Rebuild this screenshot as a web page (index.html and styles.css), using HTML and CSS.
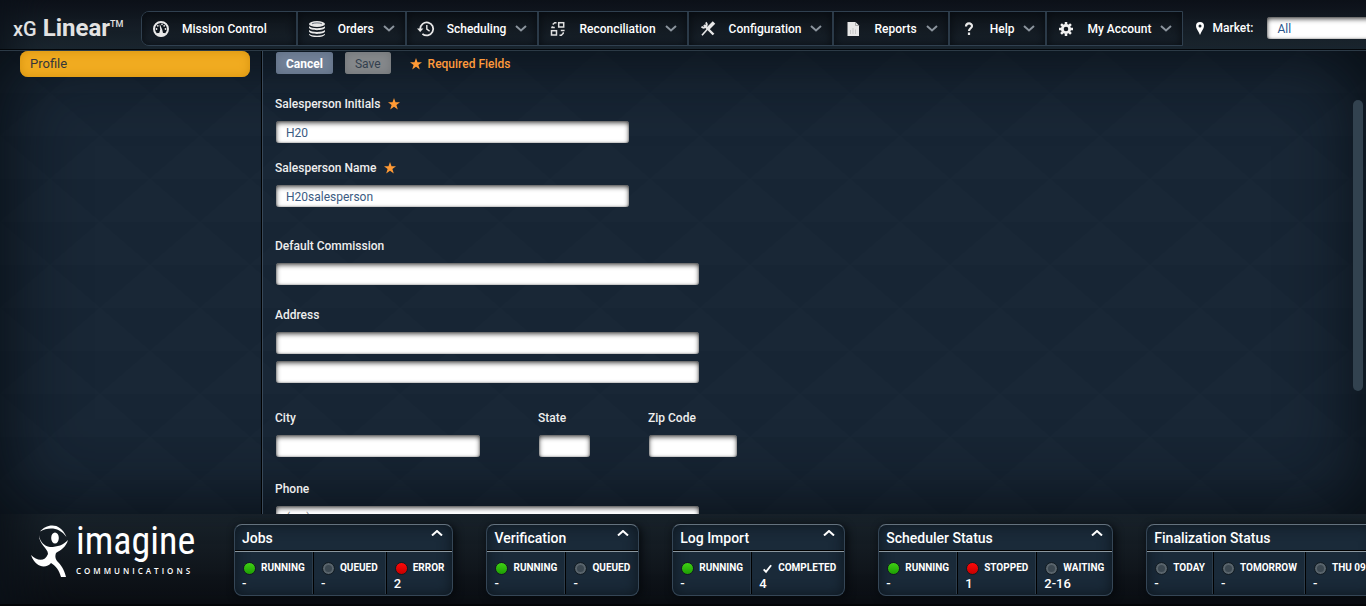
FILE: index.html
```html
<!DOCTYPE html>
<html lang="en">
<head>
<meta charset="utf-8">
<title>xG Linear</title>
<link rel="stylesheet" href="styles.css">
</head>
<body>
<header class="topbar">
  <h1 class="brand"><span class="brand-xg">xG</span> Linear<sup class="brand-tm">TM</sup></h1>
  <nav class="menu">
    <button class="menu-item menu-item-plain" type="button">
      <svg class="menu-icon" viewBox="0 0 18 18"><circle cx="9" cy="9" r="7" fill="#0e151c" stroke="#e8e8e8" stroke-width="2"/><path d="M4 14.500a7 7 0 0 0 10 0l-1.500-1.500H11l-.8-3.500L8 4.500l-.4.200.6 5-1 3.300H5.500z" fill="#e8e8e8"/><g fill="#e8e8e8"><circle cx="4.500" cy="9" r=".9"/><circle cx="5.800" cy="5.800" r=".9"/><circle cx="12.200" cy="5.800" r=".9"/><circle cx="13.500" cy="9" r=".9"/><circle cx="10" cy="4.400" r=".8"/></g></svg>
      Mission Control
    </button>
    <button class="menu-item" type="button">
      <svg class="menu-icon" viewBox="0 0 18 18" fill="#e8e8e8"><ellipse cx="9" cy="4" rx="8" ry="3"/><path d="M1 6.200c2 2.600 14 2.600 16 0v1.600c-1 3.200-15 3.200-16 0zM1 10c2 2.600 14 2.600 16 0v1.600c-1 3.200-15 3.200-16 0zM1 13.800c2 2.600 14 2.600 16 0v.7c-1 3.400-15 3.400-16 0z"/><path d="M4 3.800c2-1.200 8-1.200 10 0" stroke="#68707a" fill="none"/></svg>
      Orders
      <svg class="chevron" viewBox="0 0 12 7"><path d="M1 1l5 4.500L11 1"/></svg>
    </button>
    <button class="menu-item" type="button">
      <svg class="menu-icon" viewBox="0 0 18 18" fill="none" stroke="#e8e8e8" stroke-width="1.800"><path d="M3.200 9A6.500 6.500 0 1 1 5.400 13.800"/><path d="M9.800 5v4.200l2.800 1.900" stroke-width="1.400"/><path d="M0 8.500h6.400L3.200 12z" fill="#e8e8e8" stroke="none"/></svg>
      Scheduling
      <svg class="chevron" viewBox="0 0 12 7"><path d="M1 1l5 4.500L11 1"/></svg>
    </button>
    <button class="menu-item" type="button">
      <svg class="menu-icon" viewBox="0 0 18 18" fill="none" stroke="#e0e0e0" stroke-width="1.500"><rect x="9.700" y="2.700" width="5" height="4.300"/><rect x="2.500" y="10.700" width="5" height="4.300"/><path d="M7.500 2.700H5.700L3.700 4.500M2.200 7.600h3.600M3.500 6.200v1M10.500 15.200h1.800l2-2v-1M11.800 10.500h3.800"/></svg>
      Reconciliation
      <svg class="chevron" viewBox="0 0 12 7"><path d="M1 1l5 4.500L11 1"/></svg>
    </button>
    <button class="menu-item" type="button">
      <svg class="menu-icon" viewBox="0 0 18 18" stroke="#e8e8e8" fill="none"><path d="M5 5l9.500 9.500" stroke-width="2.400"/><path d="M6.800 2.400A3 3 0 1 1 2.500 6.600" stroke-width="1.800"/><path d="M15 2.500L9 8.500" stroke-width="3.600"/><path d="M9 8.500l-6 6.800" stroke-width="1.600"/></svg>
      Configuration
      <svg class="chevron" viewBox="0 0 12 7"><path d="M1 1l5 4.500L11 1"/></svg>
    </button>
    <button class="menu-item" type="button">
      <svg class="menu-icon" viewBox="0 0 18 18"><path d="M3.500 2h8L15 5.500V16H3.500z" fill="#e8e8e8"/><path d="M11.500 2v3.500H15" stroke="#999" stroke-width=".8" fill="none"/><path d="M6.500 14v-4M9 14V8M11.500 14V9.500" stroke="#c8c8c8"/></svg>
      Reports
      <svg class="chevron" viewBox="0 0 12 7"><path d="M1 1l5 4.500L11 1"/></svg>
    </button>
    <button class="menu-item" type="button">
      <svg class="menu-icon" viewBox="0 0 18 18" fill="none" stroke="#e8e8e8" stroke-width="2.200"><path d="M6 6.500C6 2.500 12 2.500 12 6c0 2.200-3 2.400-3 5"/><path d="M9 12.600V15"/></svg>
      Help
      <svg class="chevron" viewBox="0 0 12 7"><path d="M1 1l5 4.500L11 1"/></svg>
    </button>
    <button class="menu-item" type="button">
      <svg class="menu-icon" viewBox="0 0 18 18" fill="none" stroke="#f0f0f0"><circle cx="9" cy="9" r="3.700" stroke-width="2.800"/><path d="M9 2v2.500M9 13.500V16M2 9h2.500M13.500 9H16M4.050 4.050l1.800 1.800M12.150 12.150l1.800 1.800M4.050 13.950l1.800-1.800M12.150 5.850l1.800-1.800" stroke-width="2.500"/></svg>
      My Account
      <svg class="chevron" viewBox="0 0 12 7"><path d="M1 1l5 4.500L11 1"/></svg>
    </button>
  </nav>
  <div class="market">
    <svg class="pin" viewBox="0 0 8 13"><path d="M4 0a4 4 0 0 1 4 4c0 2.500-2.500 5-4 9C2.500 9 0 6.500 0 4a4 4 0 0 1 4-4z" fill="#fff"/><circle cx="4" cy="4" r="1.500" fill="#17212b"/></svg>
    <label for="market">Market:</label>
    <select id="market" class="field market-select"><option>All</option></select>
  </div>
</header>

<main class="page">
  <aside class="sidebar"><a class="side-link" href="#profile">Profile</a></aside>
  <form class="profile" id="profile">
    <div class="actions">
      <button class="btn btn-cancel" type="button">Cancel</button>
      <button class="btn btn-save" type="button" disabled>Save</button>
      <span class="required"><svg class="star" viewBox="0 0 12 12"><path d="M6 0l1.500 4.300H12L8.400 7l1.400 4.500L6 8.800l-3.800 2.700L3.600 7 0 4.300h4.500z"/></svg>Required Fields</span>
    </div>
    <div class="group">
      <label class="caption" for="initials">Salesperson Initials<svg class="star" viewBox="0 0 12 12"><path d="M6 0l1.500 4.300H12L8.400 7l1.400 4.500L6 8.800l-3.800 2.700L3.600 7 0 4.300h4.500z"/></svg></label>
      <input class="field medium" id="initials" type="text" value="H20">
    </div>
    <div class="group group-name">
      <label class="caption" for="name">Salesperson Name<svg class="star" viewBox="0 0 12 12"><path d="M6 0l1.500 4.300H12L8.400 7l1.400 4.500L6 8.800l-3.800 2.700L3.600 7 0 4.300h4.500z"/></svg></label>
      <input class="field medium" id="name" type="text" value="H20salesperson">
    </div>
    <div class="group group-commission">
      <label class="caption" for="commission">Default Commission</label>
      <input class="field wide" id="commission" type="text">
    </div>
    <div class="group group-address">
      <label class="caption" for="address">Address</label>
      <input class="field wide" id="address" type="text">
      <input class="field wide second-line" id="address2" type="text" aria-label="Address line 2">
    </div>
    <div class="locality">
      <div class="group city"><label class="caption" for="city">City</label><input class="field" id="city" type="text"></div>
      <div class="group state"><label class="caption" for="state">State</label><input class="field" id="state" type="text"></div>
      <div class="group zip"><label class="caption" for="zip">Zip Code</label><input class="field" id="zip" type="text"></div>
    </div>
    <div class="group">
      <label class="caption" for="phone">Phone</label>
      <input class="field wide" id="phone" type="tel" placeholder="(___) ___-____">
    </div>
  </form>
  <div class="scroll-track"><div class="scroll-thumb"></div></div>
</main>

<footer class="statusbar">
  <div class="logo">
    <svg class="logo-mark" viewBox="0 0 38 52" fill="#fff"><path d="M10 6.500C16-1 30-4 36.500 12 29 1.500 18 2 10 6.500z"/><ellipse cx="25" cy="13" rx="3.800" ry="5.500"/><path d="M9 10c1 7 5 11 11 12 8 0 13-2 18-7-2 7-7 10-12 13-1 3-1 5 1 8 4 4 7 8 9 16H31c-2-7-5-11-10-14-4 5-15 6-20-8 6 6 14 7 17-1 0-6-9-9-9-19z"/></svg>
    <div class="logo-words"><span class="logo-name">imagine</span><span class="logo-sub">COMMUNICATIONS</span></div>
  </div>

  <section class="panel">
    <h2 class="panel-title">Jobs<svg class="caret" viewBox="0 0 12 6"><path d="M1 5.500L6 1l5 4.500"/></svg></h2>
    <div class="cells">
      <div class="cell"><span class="status"><i class="dot green"></i>RUNNING</span><b class="count">-</b></div>
      <div class="cell"><span class="status"><i class="dot grey"></i>QUEUED</span><b class="count">-</b></div>
      <div class="cell"><span class="status"><i class="dot red"></i>ERROR</span><b class="count">2</b></div>
    </div>
  </section>
  <section class="panel">
    <h2 class="panel-title">Verification<svg class="caret" viewBox="0 0 12 6"><path d="M1 5.500L6 1l5 4.500"/></svg></h2>
    <div class="cells">
      <div class="cell"><span class="status"><i class="dot green"></i>RUNNING</span><b class="count">-</b></div>
      <div class="cell"><span class="status"><i class="dot grey"></i>QUEUED</span><b class="count">-</b></div>
    </div>
  </section>
  <section class="panel">
    <h2 class="panel-title">Log Import<svg class="caret" viewBox="0 0 12 6"><path d="M1 5.500L6 1l5 4.500"/></svg></h2>
    <div class="cells">
      <div class="cell"><span class="status"><i class="dot green"></i>RUNNING</span><b class="count">-</b></div>
      <div class="cell"><span class="status"><svg class="check" viewBox="0 0 15 11"><path d="M5 6.500l2.500 2.500L13 2"/></svg>COMPLETED</span><b class="count">4</b></div>
    </div>
  </section>
  <section class="panel">
    <h2 class="panel-title">Scheduler Status<svg class="caret" viewBox="0 0 12 6"><path d="M1 5.500L6 1l5 4.500"/></svg></h2>
    <div class="cells">
      <div class="cell"><span class="status"><i class="dot green"></i>RUNNING</span><b class="count">-</b></div>
      <div class="cell"><span class="status"><i class="dot red"></i>STOPPED</span><b class="count">1</b></div>
      <div class="cell"><span class="status"><i class="dot grey"></i>WAITING</span><b class="count">2-16</b></div>
    </div>
  </section>
  <section class="panel">
    <h2 class="panel-title">Finalization Status</h2>
    <div class="cells">
      <div class="cell"><span class="status"><i class="dot grey"></i>TODAY</span><b class="count">-</b></div>
      <div class="cell"><span class="status"><i class="dot grey"></i>TOMORROW</span><b class="count">-</b></div>
      <div class="cell"><span class="status"><i class="dot grey"></i>THU 09</span><b class="count">-</b></div>
    </div>
  </section>
</footer>
</body>
</html>
```
FILE: styles.css
```css
* { box-sizing: border-box; }

body {
  margin: 0;
  height: 100vh;
  display: flex;
  flex-direction: column;
  overflow: hidden;
  background: #182634;
  color: #fff;
  font: 500 12px/16px Roboto, "Liberation Sans", sans-serif;
}

button, input, select { font: inherit; }

/* Top bar */
.topbar {
  flex: none;
  display: flex;
  align-items: center;
  height: 51px;
  padding: 6px 0 0 13px;
  overflow: hidden;
  background: linear-gradient(#0d1119, #1b2730);
  border-bottom: 1px solid #2c3a46;
  box-shadow: inset 0 -1px #03060a, inset 40px 0 40px -30px #0b1119;
}

.brand {
  flex: none;
  width: 128px;
  margin: 0;
  font-size: 24px;
  line-height: 32px;
  font-weight: 700;
  color: #e2e2e2;
  white-space: nowrap;
}
.brand-xg { font-size: 20px; font-weight: 500; }
.brand-tm { font-size: 9px; font-weight: 500; line-height: 0; vertical-align: 9px; }

.menu {
  flex: none;
  display: flex;
  height: 35px;
  border: 1px solid #30404f;
  border-radius: 8px 0 0 8px;
  overflow: hidden;
}
.menu-item {
  display: flex;
  align-items: center;
  padding: 1px 10px 0;
  border: 0;
  border-right: 2px solid #2b3a48;
  background: linear-gradient(#0d1218, #18222b);
  box-shadow: inset 0 0 10px #070b10;
  color: #fff;
  white-space: nowrap;
}
.menu-item:last-child { border-right: 0; }
.menu-item-plain { padding-right: 29px; }
.menu-icon { width: 18px; height: 18px; margin-right: 12px; }
.chevron {
  width: 12px;
  height: 7px;
  margin-left: 9px;
  fill: none;
  stroke: #8b949d;
  stroke-width: 2;
}

.market { flex: none; display: flex; align-items: center; padding-left: 13px; }
.pin { width: 8px; height: 13px; margin-right: 8px; }

.field {
  display: block;
  height: 22px;
  margin: 0 0 0 1px;
  padding: 2px 10px 0;
  border: 0;
  border-radius: 3px;
  outline: 0;
  background: #fff;
  box-shadow: inset 0 2px 5px rgba(0, 0, 0, .7), inset 0 0 2px rgba(0, 0, 0, .4);
  color: #3b5b82;
  font-weight: 400;
}
.field::placeholder { color: #777; }
.market-select { width: 170px; margin-left: 14px; appearance: none; color: #2a568c; }

/* Page body */
.page {
  flex: 1;
  min-height: 0;
  display: flex;
  overflow: hidden;
  background: #172534 url("data:image/svg+xml,%3Csvg xmlns='http://www.w3.org/2000/svg' width='100' height='86'%3E%3Cpath d='M50 0L100 43H0zM0 43L50 86H-50zM100 43L150 86H50z' fill='%23fff' fill-opacity='.008'/%3E%3C/svg%3E") 0 42px;
  box-shadow: inset 0 0 80px #060b10;
}
.sidebar {
  flex: none;
  width: 262px;
  padding: 0 11px 0 20px;
  border-right: 1px solid #000;
}
.side-link {
  display: block;
  padding: 5px 10px;
  border-radius: 8px;
  background: #f0ab20;
  box-shadow: inset 0 0 10px #d6920f;
  color: #34363a;
  font-size: 13px;
  font-weight: 400;
  text-decoration: none;
}

.profile {
  flex: 1;
  padding: 1px 12px 0;
  border-left: 1px solid #384858;
}
.actions { display: flex; align-items: center; margin: 0 0 22px 1px; }
.btn {
  height: 22px;
  padding: 1px 10px 0;
  border: 0;
  border-radius: 3px;
}
.btn-cancel {
  margin-right: 12px;
  background: #718096;
  box-shadow: inset 0 0 8px #5d6c82;
  color: #fff;
  font-weight: 700;
}
.btn-save {
  margin-right: 19px;
  background: #85888b;
  box-shadow: inset 0 0 8px #707376;
  color: #333f4d;
  font-weight: 400;
}
.required { display: flex; align-items: center; gap: 6px; padding-top: 1px; color: #ff9a3c; }
.star { flex: none; width: 12px; height: 12px; fill: #ff9a35; }

.group { margin-bottom: 17px; }
.group-name { margin-bottom: 31px; }
.group-commission { margin-bottom: 22px; }
.group-address { margin-bottom: 27px; }
.caption {
  display: flex;
  align-items: center;
  gap: 8px;
  margin-bottom: 9px;
  color: #eee;
}
.medium { width: 353px; }
.wide { width: 423px; }
.second-line { margin-top: 7px; }
.locality { display: flex; margin-bottom: 24px; }
.locality .group { margin-bottom: 0; }
.locality .field { width: calc(100% - 1px); }
.city { width: 205px; margin-right: 58px; }
.state { width: 52px; margin-right: 58px; }
.zip { width: 89px; }

.scroll-track { flex: none; width: 13px; padding-top: 49px; }
.scroll-thumb { width: 10px; height: 291px; border-radius: 5px; background: #32424f; }

/* Status bar */
.statusbar {
  flex: none;
  display: flex;
  align-items: flex-start;
  gap: 33px;
  height: 92px;
  padding: 10px 0 0 30px;
  overflow: hidden;
  background: linear-gradient(#19232b, #0a0d12);
  border-bottom: 2px solid #030508;
  box-shadow: inset 50px 0 50px -30px #0b1118;
}
.logo { flex: none; display: flex; width: 171px; gap: 8px; padding-top: 1px; }
.logo-mark { flex: none; width: 38px; height: 52px; }
.logo-words { display: flex; flex-direction: column; }
.logo-name {
  font: 400 38px/32px "Liberation Sans Narrow", "Roboto Condensed", Roboto, sans-serif;
}
.logo-sub {
  font: 600 8px/12px "Open Sans", sans-serif;
  letter-spacing: 3px;
  margin-top: 8px;
}

.panel {
  flex: none;
  height: 72px;
  border: 1px solid #354656;
  border-top-color: #64727e;
  border-radius: 8px;
  background: #1a2a39;
  box-shadow: inset 0 0 14px #0d161e, 2px 2px 8px #05080b;
}
.panel-title {
  display: flex;
  justify-content: space-between;
  height: 27px;
  margin: 0;
  padding: 5px 9px 0 7px;
  border-bottom: 1px solid #8b979f;
  box-shadow: inset 0 -1px #000;
  font-size: 14px;
  font-weight: 500;
}
.caret { width: 12px; height: 6px; fill: none; stroke: #fff; stroke-width: 2; }
.cells { display: flex; height: 42px; }
.cell {
  padding: 8px 8px 0 7px;
  border-right: 1px solid #000;
  box-shadow: inset -1px 0 #2c3c4b;
}
.cell:last-child { border-right: 0; box-shadow: none; }
.status {
  display: flex;
  align-items: center;
  gap: 5px;
  font-size: 10px;
  font-weight: 700;
  white-space: nowrap;
}
.dot {
  width: 13px;
  height: 13px;
  margin-left: 1px;
  border: 1px solid #111b22;
  border-radius: 50%;
}
.green { background: linear-gradient(#3fd014, #1e9e04); }
.red { background: linear-gradient(#ff0808, #c40000); }
.grey { background: #3c4851; box-shadow: inset 0 0 0 2px #59646c; }
.check { width: 14px; height: 11px; fill: none; stroke: #fff; stroke-width: 2; }
.count { display: block; font-size: 13px; font-weight: 500; }
```
